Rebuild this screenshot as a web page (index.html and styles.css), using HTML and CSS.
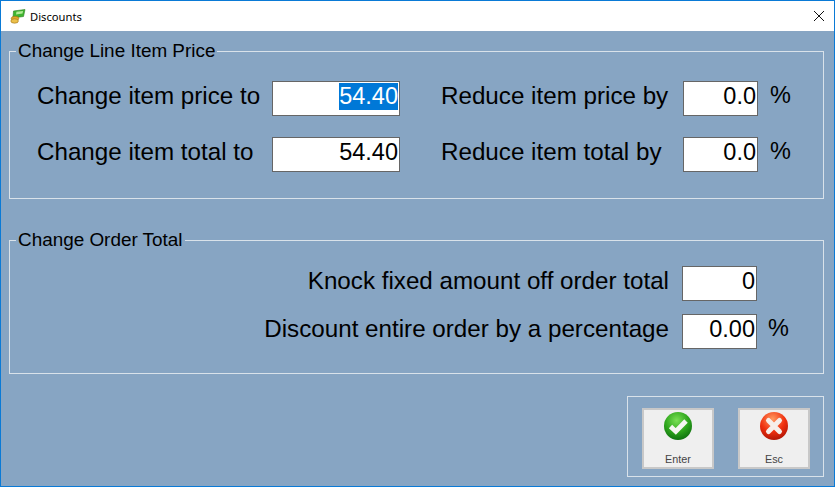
FILE: index.html
```html
<!DOCTYPE html>
<html lang="en">
<head>
    <meta charset="UTF-8">
    <title>Discounts</title>
    <link rel="stylesheet" href="styles.css">
</head>
<body>
    <div class="window">
        <div class="titlebar">
            <svg class="app-icon" width="16" height="16" viewBox="0 0 16 16">
                <path d="M3.5 3 L15 1.5 L13.5 8.5 L3 10 Z" fill="#3fb52f" stroke="#2c7d22" stroke-width="0.6"/>
                <path d="M6.5 3.8 L13 3 L12.5 5.6 L6 6.4 Z" fill="#b4eb98"/>
                <ellipse cx="5" cy="10.5" rx="3.8" ry="2.2" fill="#e0a92c" stroke="#9c6f12" stroke-width="0.6"/>
                <ellipse cx="4.6" cy="13" rx="3.8" ry="2.2" fill="#ecc04a" stroke="#9c6f12" stroke-width="0.6"/>
            </svg>
            <span class="title">Discounts</span>
            <svg class="close" width="10" height="10" viewBox="0 0 10 10">
                <path d="M0 0 L10 10 M10 0 L0 10" stroke="#111" stroke-width="1" fill="none"/>
            </svg>
        </div>

        <div class="content">
            <fieldset class="group line-group">
                <legend>Change Line Item Price</legend>
                <div class="line-grid">
                    <label>Change item price to</label>
                    <div class="field"><span class="selected">54.40</span></div>
                    <label class="second">Reduce item price by</label>
                    <div class="field">0.0</div>
                    <span class="pct">%</span>

                    <label>Change item total to</label>
                    <div class="field">54.40</div>
                    <label class="second">Reduce item total by</label>
                    <div class="field">0.0</div>
                    <span class="pct">%</span>
                </div>
            </fieldset>

            <fieldset class="group order-group">
                <legend>Change Order Total</legend>
                <div class="order-grid">
                    <label>Knock fixed amount off order total</label>
                    <div class="field">0</div>
                    <span></span>

                    <label>Discount entire order by a percentage</label>
                    <div class="field">0.00</div>
                    <span class="pct">%</span>
                </div>
            </fieldset>

            <div class="actions">
                <div class="btn-box">
                    <button type="button" class="btn">
                        <svg width="30" height="30" viewBox="0 0 30 30">
                            <defs>
                                <radialGradient id="greenBall" cx="45%" cy="30%" r="75%">
                                    <stop offset="0" stop-color="#7be055"/>
                                    <stop offset="0.55" stop-color="#2ea61c"/>
                                    <stop offset="1" stop-color="#0b6a0f"/>
                                </radialGradient>
                            </defs>
                            <circle cx="15" cy="15" r="14" fill="url(#greenBall)"/>
                            <path d="M7.5 15.5 L12.8 20.5 L23 10" fill="none" stroke="#f6f6f2" stroke-width="4.8"/>
                        </svg>
                        <span>Enter</span>
                    </button>
                    <button type="button" class="btn">
                        <svg width="30" height="30" viewBox="0 0 30 30">
                            <defs>
                                <radialGradient id="redBall" cx="45%" cy="25%" r="80%">
                                    <stop offset="0" stop-color="#ff9a60"/>
                                    <stop offset="0.55" stop-color="#f0300f"/>
                                    <stop offset="1" stop-color="#a81204"/>
                                </radialGradient>
                            </defs>
                            <circle cx="15" cy="15" r="14" fill="url(#redBall)"/>
                            <path d="M9.5 9.5 L20.5 20.5 M20.5 9.5 L9.5 20.5" fill="none" stroke="#f6eeea" stroke-width="5" stroke-linecap="round"/>
                        </svg>
                        <span>Esc</span>
                    </button>
                </div>
            </div>
        </div>
    </div>
</body>
</html>
```

FILE: styles.css
```css
html, body {
    margin: 0;
    padding: 0;
}

body {
    font-family: "Liberation Sans", Arial, sans-serif;
    color: #000;
    overflow: hidden;
}

.window {
    box-sizing: border-box;
    width: 835px;
    height: 487px;
    border: 1px solid #0a7ad6;
    background-color: #87a5c3;
    display: flex;
    flex-direction: column;
}

.titlebar {
    height: 30px;
    flex: none;
    background-color: #fff;
    display: flex;
    align-items: center;
    padding: 0 10px 0 9px;
}

.app-icon {
    margin-right: 4px;
}

.title {
    font-family: "Noto Sans", sans-serif;
    font-size: 11.2px;
    flex: 1;
}

.content {
    flex: 1;
    padding: 10px 10px 0 8px;
}

.group {
    margin: 0;
    padding: 0;
    border: 1px solid #d9e2ea;
    min-width: 0;
}

.group legend {
    margin-left: 6px;
    padding: 0 2px;
    font-size: 18.9px;
    line-height: 20px;
}

.line-group {
    height: 156px;
}

.order-group {
    height: 142px;
    margin-top: 31px;
}

.line-grid {
    display: grid;
    grid-template-columns: 235px 128px 283px 75px auto;
    grid-auto-rows: 35px;
    row-gap: 21px;
    padding: 20px 0 0 27px;
    align-items: center;
}

.line-grid label, .order-grid label {
    font-size: 24.2px;
    white-space: nowrap;
    margin-bottom: 6px;
}

.line-grid .second {
    margin-left: 41px;
}

.line-grid .pct {
    margin-left: 12px;
}

.order-grid {
    display: grid;
    grid-template-columns: 659px 88px auto;
    grid-auto-rows: 35px;
    row-gap: 13px;
    padding: 16px 0 0 0;
    align-items: center;
}

.order-grid label {
    text-align: right;
}

.order-grid .field {
    margin-left: 13px;
}

.order-grid .pct {
    margin-left: 11px;
}

.field {
    box-sizing: border-box;
    height: 100%;
    background-color: #fff;
    border: 1px solid #666;
    font-size: 23.5px;
    line-height: 28px;
    text-align: right;
    padding-right: 1px;
}

.selected {
    background-color: #0078d7;
    color: #fff;
    display: inline-block;
    line-height: 27px;
    vertical-align: top;
    margin-top: 1px;
}

.pct {
    font-size: 23.5px;
    margin-bottom: 6px;
}

.actions {
    display: flex;
    justify-content: flex-end;
    margin-top: 22px;
}

.btn-box {
    box-sizing: border-box;
    width: 197px;
    height: 81px;
    border: 1px solid #d9e2ea;
    display: flex;
    gap: 24px;
    padding: 11px 0 0 14px;
}

.btn {
    box-sizing: border-box;
    width: 72px;
    height: 61px;
    background-color: #efefef;
    border: 2px solid #c8c8c8;
    padding: 1px 0 0;
    margin: 0;
    display: flex;
    flex-direction: column;
    align-items: center;
    font-family: "Liberation Sans", Arial, sans-serif;
    font-size: 10.8px;
    color: #444;
}

.btn span {
    margin-top: 12px;
}
```
